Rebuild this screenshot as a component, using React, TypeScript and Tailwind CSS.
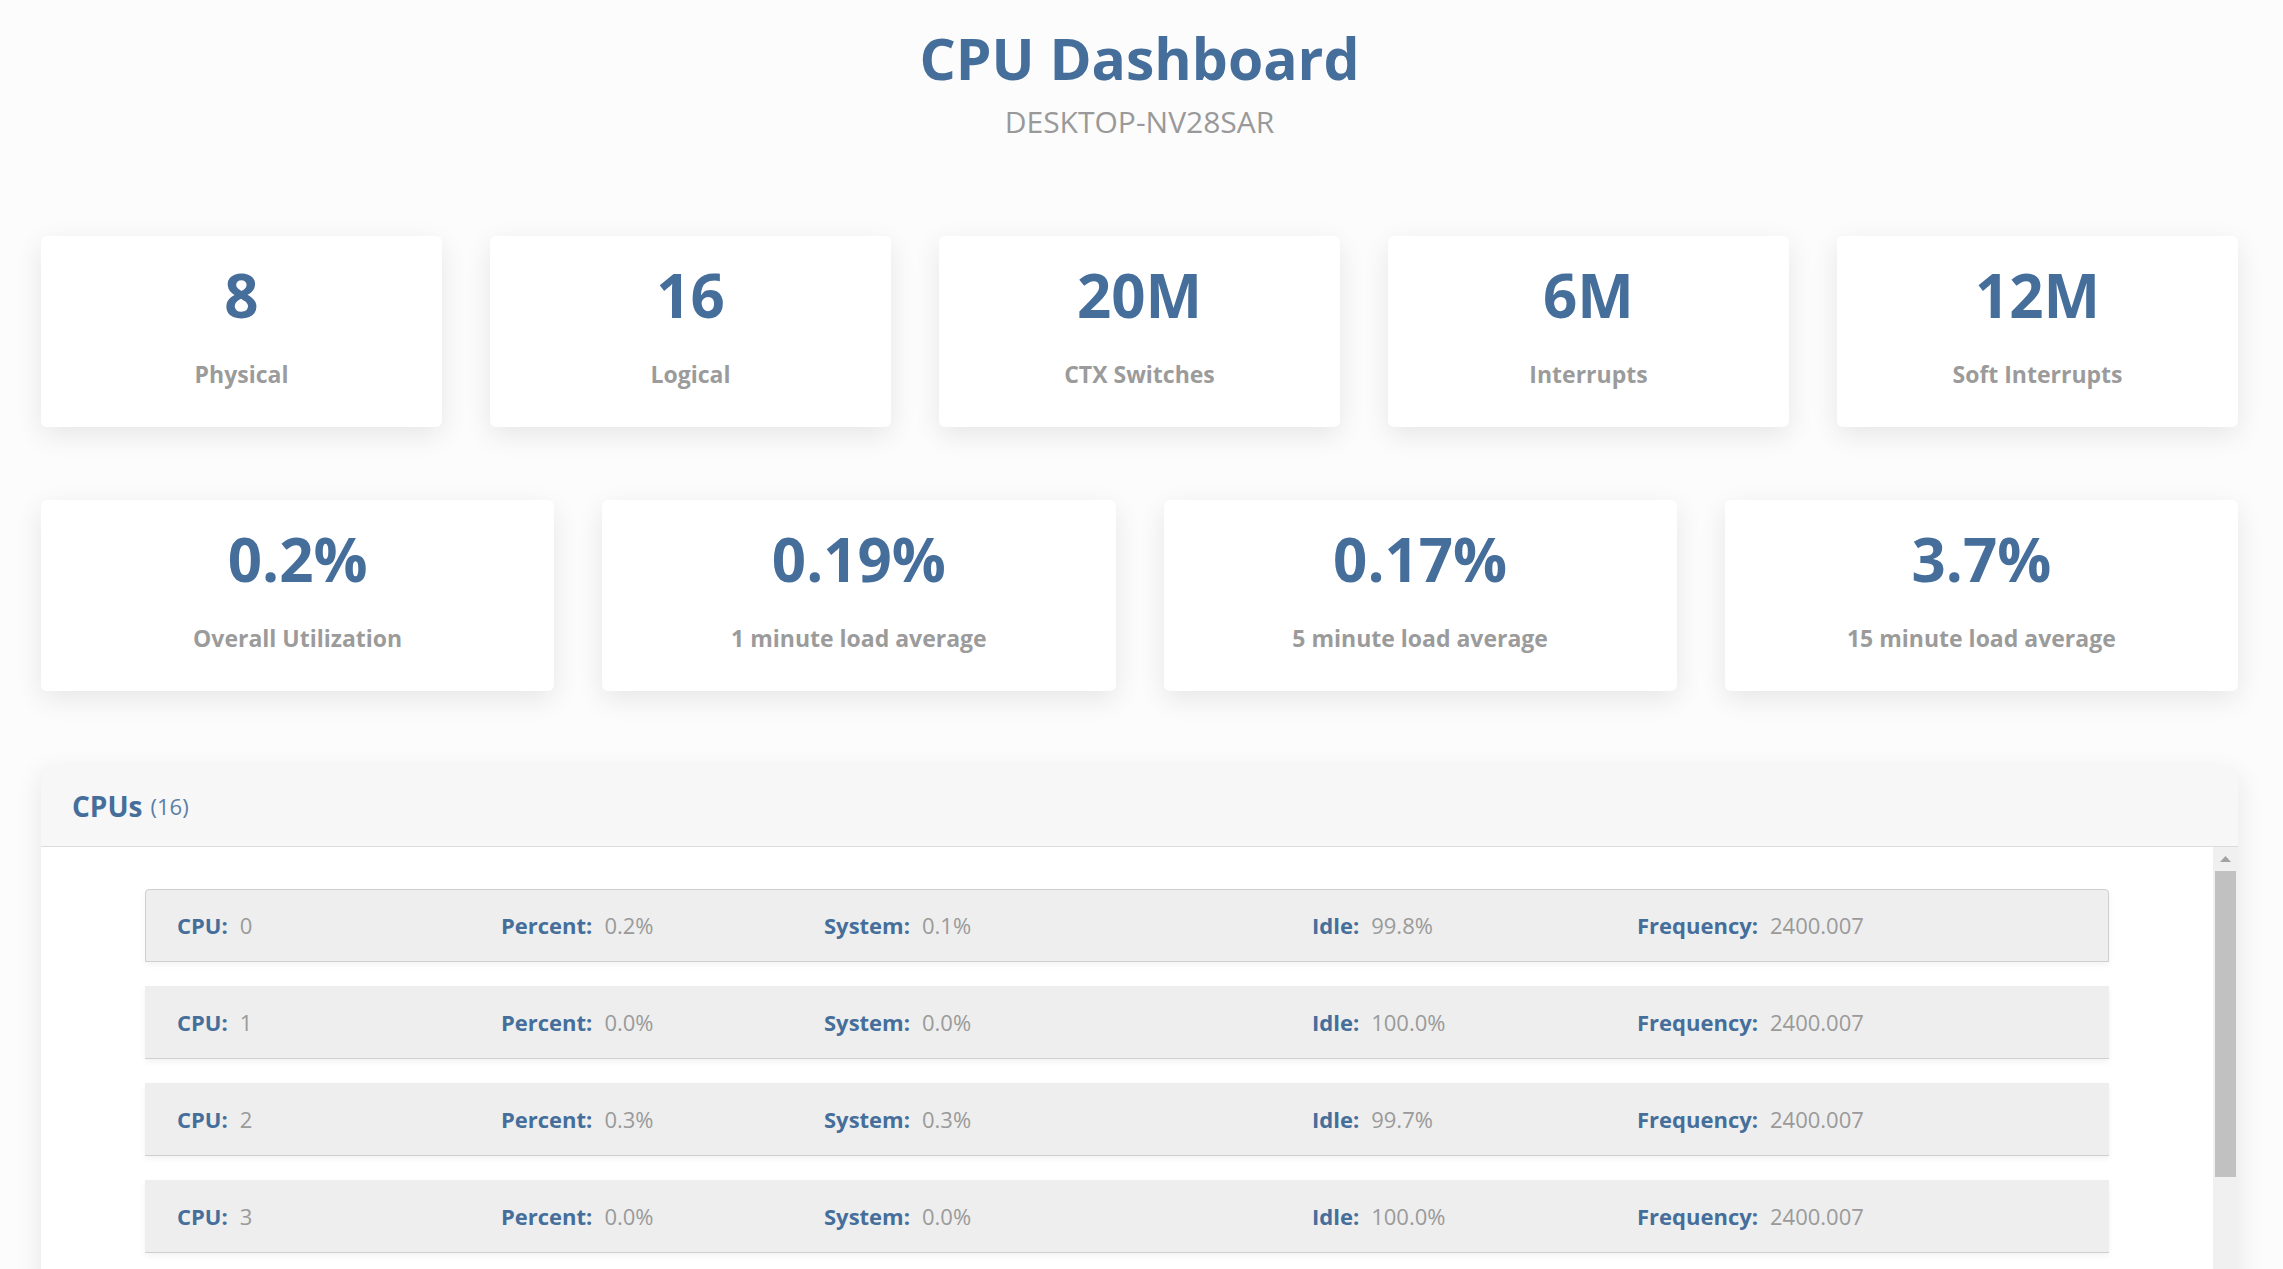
import React from 'react';

// CPU dashboard snapshot
const topStats = [
  { value: '8', label: 'Physical' },
  { value: '16', label: 'Logical' },
  { value: '20M', label: 'CTX Switches' },
  { value: '6M', label: 'Interrupts' },
  { value: '12M', label: 'Soft Interrupts' },
];

const loadStats = [
  { value: '0.2%', label: 'Overall Utilization' },
  { value: '0.19%', label: '1 minute load average' },
  { value: '0.17%', label: '5 minute load average' },
  { value: '3.7%', label: '15 minute load average' },
];

// only the rows that are in view of the scroll area
const cpus = [
  { cpu: 0, percent: '0.2%', system: '0.1%', idle: '99.8%', freq: '2400.007' },
  { cpu: 1, percent: '0.0%', system: '0.0%', idle: '100.0%', freq: '2400.007' },
  { cpu: 2, percent: '0.3%', system: '0.3%', idle: '99.7%', freq: '2400.007' },
  { cpu: 3, percent: '0.0%', system: '0.0%', idle: '100.0%', freq: '2400.007' },
];

function StatCard({ value, label }: { value: string; label: string }) {
  return (
    <div className="h-[191px] rounded-[6px] bg-white shadow-[0_8px_28px_rgba(0,0,0,0.09)] flex flex-col items-center pt-[29px]">
      <div className="text-[60px] leading-none font-bold text-[#466e9b]">{value}</div>
      <div className="mt-[38px] text-[23px] leading-none font-bold text-[#9b9b9b]">{label}</div>
    </div>
  );
}

function Field({ label, value }: { label: string; value: string | number }) {
  return (
    <div className="flex items-baseline">
      <span className="font-bold text-[#466e9b]">{label}</span>
      <span className="ml-[12px] text-[#9a9a9a]">{value}</span>
    </div>
  );
}

function CpuRow({ row, first }: { row: (typeof cpus)[number]; first: boolean }) {
  return (
    <div
      className={
        first
          ? 'h-[73px] shrink-0 bg-[#eeeeee] border border-[#cfcfcf] rounded-t-[4px] shadow-[0_3px_6px_rgba(0,0,0,0.05)] grid grid-cols-[324px_323px_488px_325px_1fr] items-center pl-[31px] text-[22px]'
          : 'h-[73px] shrink-0 bg-[#eeeeee] border-b border-[#cfcfcf] shadow-[0_3px_6px_rgba(0,0,0,0.05)] grid grid-cols-[324px_323px_488px_325px_1fr] items-center pl-[32px] text-[22px]'
      }
    >
      <Field label="CPU:" value={row.cpu} />
      <Field label="Percent:" value={row.percent} />
      <Field label="System:" value={row.system} />
      <Field label="Idle:" value={row.idle} />
      <Field label="Frequency:" value={row.freq} />
    </div>
  );
}

export default function App() {
  return (
    <div className="h-[1269px] overflow-hidden bg-[#fcfcfc] font-['Open_Sans','Noto_Sans',sans-serif]">
      <div className="pl-[41px] pr-[45px]">
        <header className="flex flex-col items-center pt-[30px]">
          <h1 className="text-[57px] leading-none font-bold text-[#466e9b]">CPU Dashboard</h1>
          <div className="mt-[20px] text-[30px] leading-none text-[#999999]">DESKTOP-NV28SAR</div>
        </header>

        <div className="mt-[99px] grid grid-cols-5 gap-[48px]">
          {topStats.map((s) => (
            <StatCard key={s.label} value={s.value} label={s.label} />
          ))}
        </div>

        <div className="mt-[73px] grid grid-cols-4 gap-[48px]">
          {loadStats.map((s) => (
            <StatCard key={s.label} value={s.value} label={s.label} />
          ))}
        </div>

        <div className="mt-[75px] rounded-t-[6px] bg-white shadow-[0_8px_28px_rgba(0,0,0,0.09)]">
          <div className="h-[81px] rounded-t-[6px] bg-[#f7f7f7] border-b border-[#dcdcdc] flex items-center px-[31px]">
            <span className="text-[28px] font-bold text-[#466e9b]">CPUs</span>
            <span className="ml-[8px] text-[22px] text-[#5b7ea8]">(16)</span>
          </div>
          <div className="flex h-[700px]">
            <div className="flex-1 overflow-hidden px-[104px] pt-[42px] flex flex-col gap-[24px]">
              {cpus.map((c, i) => (
                <CpuRow key={c.cpu} row={c} first={i === 0} />
              ))}
            </div>
            <div className="w-[25px] shrink-0 bg-[#f0f0f0] flex flex-col items-center">
              <svg className="mt-[9px]" width="11" height="6" viewBox="0 0 11 6">
                <path d="M5.5 0 L11 6 L0 6 Z" fill="#a3a3a3" />
              </svg>
              <div className="mt-[9px] w-[21px] h-[306px] bg-[#c1c1c1]" />
            </div>
          </div>
        </div>
      </div>
    </div>
  );
}
